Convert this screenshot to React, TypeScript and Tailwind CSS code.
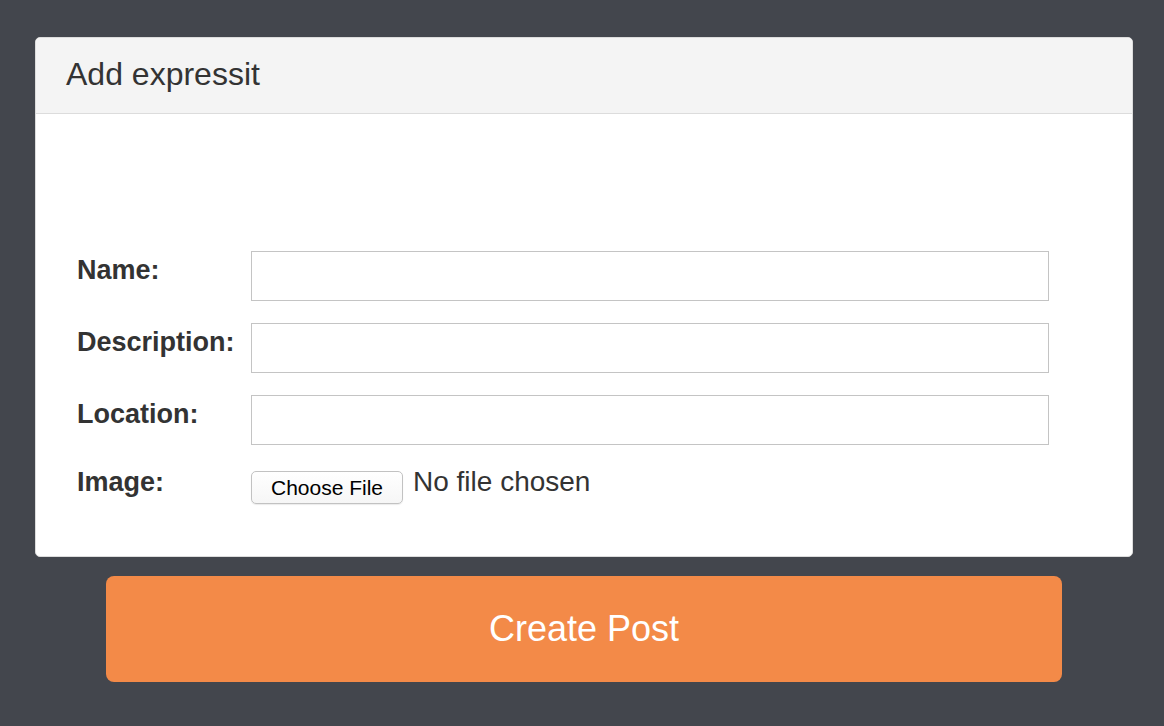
import React from 'react';

const fields = ['Name:', 'Description:', 'Location:'];

const App: React.FC = () => {
  return (
    <div className="min-h-[726px] bg-[#43464d] pt-[37px] font-['Liberation_Sans',Arial,sans-serif] text-[#333]">
      {/* Panel */}
      <div className="ml-[35px] w-[1098px] overflow-hidden rounded-[5px] border border-[#dcdcdc] bg-white">
        <div className="h-[76px] border-b border-[#dcdcdc] bg-[#f4f4f4] pl-[30px] pt-[17px] text-[32px] leading-[38px]">
          Add expressit
        </div>

        <form className="flex flex-col gap-[22px] pl-[41px] pt-[137px] pb-[52px]" onSubmit={(e) => e.preventDefault()}>
          {fields.map((label) => (
            <div key={label} className="flex items-start">
              <label className="w-[174px] pt-[4px] text-[27px] font-bold leading-[30px]">{label}</label>
              <input
                type="text"
                className="h-[50px] w-[798px] border border-[#c4c4c4] bg-white px-2 text-[22px] outline-none"
              />
            </div>
          ))}

          {/* Image row */}
          <div className="flex items-start">
            <label className="w-[174px] text-[27px] font-bold leading-[30px]">Image:</label>
            <button
              type="button"
              className="mt-[4px] h-[33px] w-[152px] rounded-[5px] border border-[#c2c2c2] bg-gradient-to-b from-white to-[#f6f6f6] text-[21px] leading-[31px] text-black shadow-[0_1px_1px_rgba(0,0,0,0.08)]"
            >
              Choose File
            </button>
            <span className="ml-[10px] text-[28px] leading-[30px]">No file chosen</span>
          </div>
        </form>
      </div>

      {/* Submit */}
      <button
        type="button"
        className="mt-[19px] ml-[106px] block h-[106px] w-[956px] rounded-[8px] bg-[#f38a48] text-[36px] text-white"
      >
        Create Post
      </button>
    </div>
  );
};

export default App;
